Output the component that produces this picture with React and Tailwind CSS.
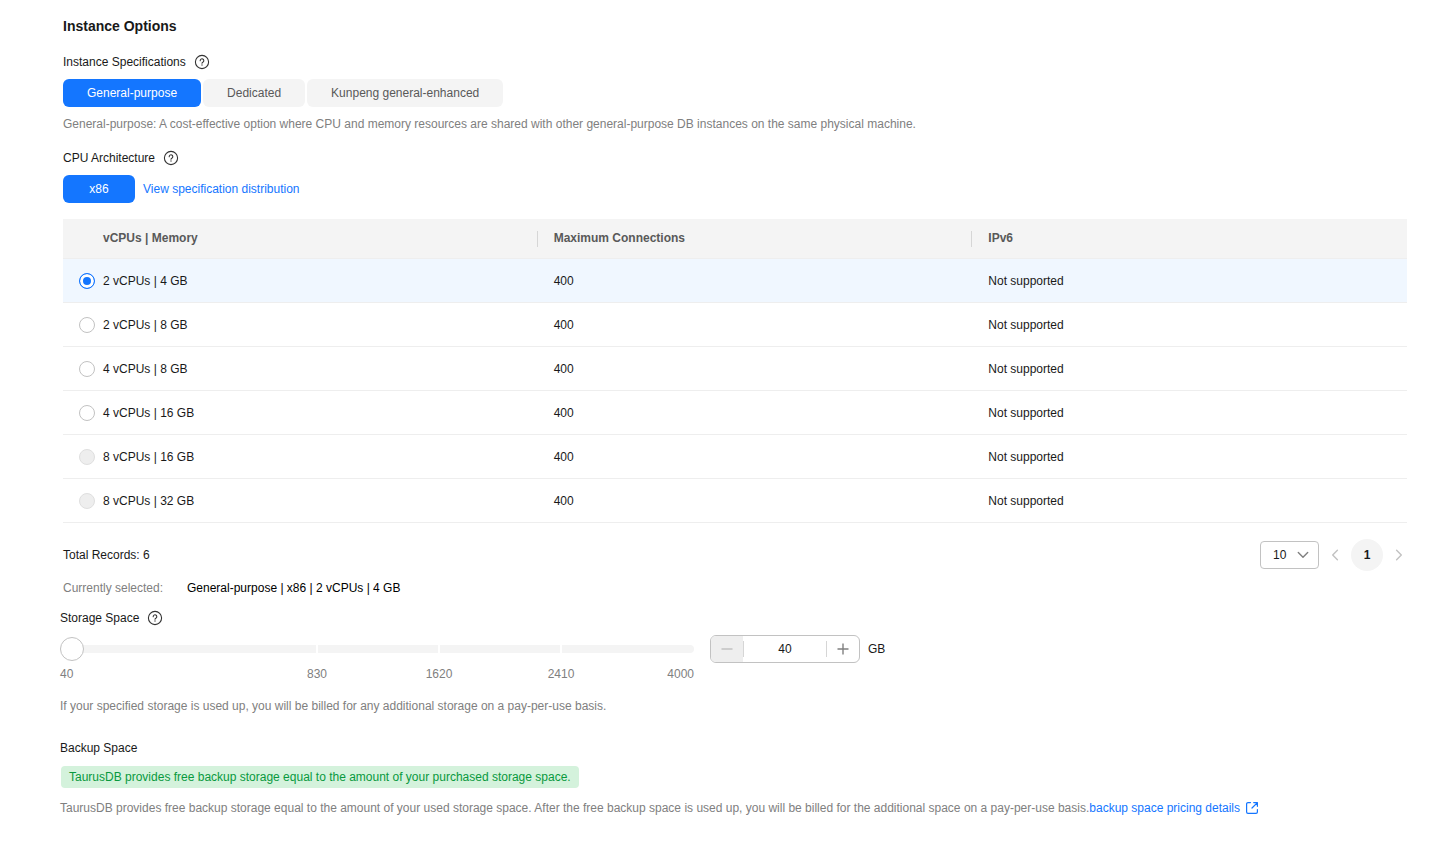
import { useState } from 'react';

const MIN_STORAGE = 40;
const MAX_STORAGE = 4000;

const specTypes = [
  {
    name: 'General-purpose',
    description:
      'A cost-effective option where CPU and memory resources are shared with other general-purpose DB instances on the same physical machine.',
  },
  { name: 'Dedicated', description: 'CPU and memory resources are exclusive to the DB instance.' },
  { name: 'Kunpeng general-enhanced', description: 'Powered by Kunpeng processors.' },
];

const flavors = [
  { id: 'f1', name: '2 vCPUs | 4 GB', connections: 400, ipv6: 'Not supported' },
  { id: 'f2', name: '2 vCPUs | 8 GB', connections: 400, ipv6: 'Not supported' },
  { id: 'f3', name: '4 vCPUs | 8 GB', connections: 400, ipv6: 'Not supported' },
  { id: 'f4', name: '4 vCPUs | 16 GB', connections: 400, ipv6: 'Not supported' },
  { id: 'f5', name: '8 vCPUs | 16 GB', connections: 400, ipv6: 'Not supported', soldOut: true },
  { id: 'f6', name: '8 vCPUs | 32 GB', connections: 400, ipv6: 'Not supported', soldOut: true },
];

function HelpButton({ label }) {
  return (
    <button type="button" aria-label={label} className="ml-2 size-4">
      <svg viewBox="0 0 16 16" className="size-4" fill="none" stroke="#333333" strokeLinecap="round">
        <circle cx="8" cy="8" r="6.6" strokeWidth="1.1" />
        <path d="M6.2 6.7a1.8 1.8 0 1 1 2.8 1.4c-.6.4-1 .6-1 1.1" strokeWidth="1.1" />
        <circle cx="8" cy="11" r="0.65" fill="#333333" stroke="none" />
      </svg>
    </button>
  );
}

function Arrow({ path, className }) {
  return (
    <svg viewBox="0 0 16 16" className={className} fill="none" stroke="currentColor" strokeWidth="1.4">
      <path d={path} strokeLinecap="round" strokeLinejoin="round" />
    </svg>
  );
}

function SpecTabs({ value, onChange }) {
  return (
    <div className="mt-2 flex gap-0.5">
      {specTypes.map((spec) => (
        <button
          key={spec.name}
          type="button"
          onClick={() => onChange(spec)}
          className={`h-7 rounded-md px-6 ${spec.name === value ? 'bg-[#1476ff] text-white' : 'bg-[#f4f4f4] text-[#595959]'}`}
        >
          {spec.name}
        </button>
      ))}
    </div>
  );
}

function FlavorTable({ selected, onSelect }) {
  return (
    <table className="mt-4 w-full table-fixed border-separate border-spacing-0 text-left">
      <thead>
        <tr className="h-10 bg-[#f4f4f4] text-[#595959]">
          <th className="w-10 border-b border-[#eeeeee] p-0"></th>
          <th className="border-b border-[#eeeeee] p-0">
            <div className="flex h-4 items-center border-r border-[#d6d6d6] pb-0.5">vCPUs | Memory</div>
          </th>
          <th className="border-b border-[#eeeeee] p-0">
            <div className="flex h-4 items-center border-r border-[#d6d6d6] pb-0.5 pl-4">Maximum Connections</div>
          </th>
          <th className="border-b border-[#eeeeee] p-0">
            <div className="flex h-4 items-center pb-0.5 pl-4">IPv6</div>
          </th>
        </tr>
      </thead>
      <tbody>
        {flavors.map((flavor) => (
          <tr key={flavor.id} className={`h-11 ${flavor.id === selected.id ? 'bg-[#f0f7ff]' : ''}`}>
            <td className="border-b border-[#eeeeee] p-0 pl-4">
              <input
                type="radio"
                id={flavor.id}
                name="flavor"
                checked={flavor.id === selected.id}
                disabled={flavor.soldOut}
                onChange={() => onSelect(flavor)}
                className="block size-4 appearance-none rounded-full border border-[#c2c2c2] bg-white checked:border-[#1476ff] checked:bg-[#1476ff] checked:shadow-[inset_0_0_0_3px_white] disabled:border-[#dfdfdf] disabled:bg-[#eeeeee]"
              />
            </td>
            <td className="border-b border-[#eeeeee] p-0">
              <label htmlFor={flavor.id}>{flavor.name}</label>
            </td>
            <td className="border-b border-[#eeeeee] p-0 pl-4">{flavor.connections}</td>
            <td className="border-b border-[#eeeeee] p-0 pl-4">{flavor.ipv6}</td>
          </tr>
        ))}
      </tbody>
    </table>
  );
}

function Pagination() {
  return (
    <div className="mt-4 flex h-8 items-center gap-2">
      <span className="mr-auto">Total Records: {flavors.length}</span>
      <div className="relative">
        <select
          aria-label="Records per page"
          className="block h-7 w-[59px] appearance-none rounded-sm border border-[#c2c2c2] bg-white pl-3"
        >
          <option>10</option>
          <option>20</option>
          <option>50</option>
        </select>
        <Arrow
          path="M3.3 5.6 8 10.3l4.7-4.7"
          className="pointer-events-none absolute top-1.5 right-2 size-4 text-[#808080]"
        />
      </div>
      <button type="button" aria-label="Previous page" disabled>
        <Arrow path="M10.4 3.3 5.7 8l4.7 4.7" className="size-4 text-[#c2c2c2]" />
      </button>
      <button type="button" className="size-8 rounded-full bg-[#f4f4f4] font-bold">
        1
      </button>
      <button type="button" aria-label="Next page" disabled>
        <Arrow path="M5.6 3.3 10.3 8l-4.7 4.7" className="size-4 text-[#c2c2c2]" />
      </button>
    </div>
  );
}

function StorageSlider({ value, onChange }) {
  return (
    <div className="w-[634px]">
      <div className="relative flex h-7 items-center">
        <div className="grid h-2 w-full grid-cols-[256fr_120fr_120fr_132fr] gap-0.5 overflow-hidden rounded-full">
          <span className="bg-[#f4f4f4]"></span>
          <span className="bg-[#f4f4f4]"></span>
          <span className="bg-[#f4f4f4]"></span>
          <span className="bg-[#f4f4f4]"></span>
        </div>
        <input
          id="storage"
          type="range"
          min={MIN_STORAGE}
          max={MAX_STORAGE}
          step={10}
          value={value}
          onChange={(e) => onChange(Number(e.target.value))}
          className="absolute inset-0 w-full appearance-none bg-transparent [&::-webkit-slider-thumb]:size-6 [&::-webkit-slider-thumb]:appearance-none [&::-webkit-slider-thumb]:rounded-full [&::-webkit-slider-thumb]:border [&::-webkit-slider-thumb]:border-[#c2c2c2] [&::-webkit-slider-thumb]:bg-white"
        />
      </div>
      <div className="mt-0.5 grid grid-cols-[196fr_122fr_122fr_122fr_72fr] text-center text-[#808080]">
        <span className="text-left">40</span>
        <span>830</span>
        <span>1620</span>
        <span>2410</span>
        <span className="text-right">4000</span>
      </div>
    </div>
  );
}

function StorageStepper({ value, onChange }) {
  return (
    <div className="flex h-7 w-[150px] items-center overflow-hidden rounded-md border border-[#c2c2c2]">
      <button
        type="button"
        aria-label="Decrease storage"
        disabled={value <= MIN_STORAGE}
        onClick={() => onChange(value - 10)}
        className="flex h-full w-8 items-center justify-center disabled:bg-[#eeeeee]"
      >
        <svg viewBox="0 0 12 12" className="size-3" stroke="#c2c2c2" strokeWidth="1.4">
          <path d="M0.5 6h11" />
        </svg>
      </button>
      <input
        type="text"
        inputMode="numeric"
        aria-label="Storage in GB"
        value={value}
        onChange={(e) => onChange(Number(e.target.value) || MIN_STORAGE)}
        className="h-4 min-w-0 flex-1 border-x border-[#d6d6d6] text-center outline-none"
      />
      <button
        type="button"
        aria-label="Increase storage"
        disabled={value >= MAX_STORAGE}
        onClick={() => onChange(value + 10)}
        className="flex h-full w-8 items-center justify-center"
      >
        <svg viewBox="0 0 12 12" className="size-3" stroke="#808080" strokeWidth="1.4">
          <path d="M0.5 6h11M6 0.5v11" />
        </svg>
      </button>
    </div>
  );
}

export default function App() {
  const [spec, setSpec] = useState(specTypes[0]);
  const [flavor, setFlavor] = useState(flavors[0]);
  const [storage, setStorage] = useState(MIN_STORAGE);

  return (
    <main className="bg-white pt-[15px] pr-[46px] pb-8 pl-[60px] font-['Liberation_Sans',Arial,sans-serif] text-xs leading-[18px] text-[#191919]">
      <section className="pl-[3px]">
        <h2 className="text-sm leading-[22px] font-bold">Instance Options</h2>

        <div className="mt-4 flex items-center">
          <h3>Instance Specifications</h3>
          <HelpButton label="About instance specifications" />
        </div>
        <SpecTabs value={spec.name} onChange={setSpec} />
        <p className="mt-2 text-[#808080]">
          {spec.name}: {spec.description}
        </p>

        <div className="mt-4 flex items-center">
          <h3>CPU Architecture</h3>
          <HelpButton label="About CPU architecture" />
        </div>
        <div className="mt-2 flex items-center gap-2">
          <button type="button" className="h-7 w-[72px] rounded-md bg-[#1476ff] text-white">
            x86
          </button>
          <a href="#distribution" className="text-[#1476ff]">
            View specification distribution
          </a>
        </div>

        <FlavorTable selected={flavor} onSelect={setFlavor} />
        <Pagination />

        <div className="mt-2 flex">
          <span className="w-[124px] text-[#808080]">Currently selected:</span>
          <span className="text-black">
            {spec.name} | x86 | {flavor.name}
          </span>
        </div>
      </section>

      <section className="mt-3">
        <div className="flex items-center">
          <label htmlFor="storage">Storage Space</label>
          <HelpButton label="About storage space" />
        </div>
        <div className="mt-2 flex items-start gap-4">
          <StorageSlider value={storage} onChange={setStorage} />
          <div className="flex items-center gap-2">
            <StorageStepper value={storage} onChange={setStorage} />
            <span>GB</span>
          </div>
        </div>
        <p className="mt-3.5 text-[#808080]">
          If your specified storage is used up, you will be billed for any additional storage on a pay-per-use basis.
        </p>
      </section>

      <section className="mt-6">
        <h3>Backup Space</h3>
        <div className="mt-2 flex">
          <p className="m-px rounded-sm bg-[#d4f2dc] px-2 py-0.5 text-[#09993e]">
            TaurusDB provides free backup storage equal to the amount of your purchased storage space.
          </p>
        </div>
        <p className="mt-2.5 text-[#808080]">
          TaurusDB provides free backup storage equal to the amount of your used storage space. After the free backup
          space is used up, you will be billed for the additional space on a pay-per-use basis.
          <a href="#pricing" className="text-[#1476ff]">
            backup space pricing details
            <svg
              viewBox="0 0 12 12"
              className="ml-1.5 inline size-3 align-[-2px]"
              fill="none"
              stroke="currentColor"
              strokeWidth="1.2"
              strokeLinecap="round"
              strokeLinejoin="round"
            >
              <path d="M4.5 0.6H2A1.4 1.4 0 0 0 0.6 2v8A1.4 1.4 0 0 0 2 11.4h8A1.4 1.4 0 0 0 11.4 10V7.5M7.7 0.6h3.7v3.7M11.2 0.8 6 6" />
            </svg>
          </a>
        </p>
      </section>
    </main>
  );
}
